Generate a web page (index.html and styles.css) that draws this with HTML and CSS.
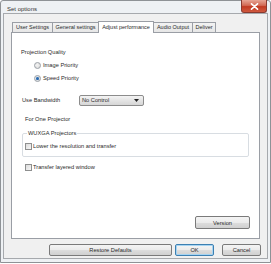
FILE: index.html
```html
<!DOCTYPE html>
<html>
<head>
<meta charset="utf-8">
<link rel="stylesheet" href="styles.css">
</head>
<body>
<div class="window">
  <div class="titlebar">
    <span class="title">Set options</span>
    <div class="close">
      <svg width="9" height="7" viewBox="0 0 9 7"><path d="M1.5 0.8 L7.5 6.2 M7.5 0.8 L1.5 6.2" stroke="#fff" stroke-width="1.6" stroke-linecap="round"/></svg>
    </div>
  </div>
  <div class="client">
    <div class="tabs">
      <div class="tab t1">User Settings</div>
      <div class="tab t2">General settings</div>
      <div class="tab t3 active">Adjust performance</div>
      <div class="tab t4">Audio Output</div>
      <div class="tab t5">Deliver</div>
    </div>
    <div class="panel">
      <div class="txt pq">Projection Quality</div>
      <div class="opt first"><span class="radio"></span>Image Priority</div>
      <div class="opt"><span class="radio checked"></span>Speed Priority</div>
      <div class="bw">
        <span class="bw-label">Use Bandwidth</span>
        <div class="combo"><span>No Control</span>
          <svg width="5" height="3" viewBox="0 0 5 3"><path d="M0 0 H5 L2.5 3 Z" fill="#222"/></svg>
        </div>
      </div>
      <div class="txt one">For One Projector</div>
      <fieldset class="group">
        <legend>WUXGA Projectors</legend>
        <div class="chk-row"><span class="chk"></span>Lower the resolution and transfer</div>
      </fieldset>
      <div class="chk-row layered"><span class="chk"></span>Transfer layered window</div>
      <div class="ver-row"><div class="btn version">Version</div></div>
    </div>
    <div class="buttons">
      <div class="btn restore">Restore Defaults</div>
      <div class="btn ok">OK</div>
      <div class="btn cancel">Cancel</div>
    </div>
  </div>
</div>
</body>
</html>
```
FILE: styles.css
```css
* { box-sizing: border-box; }
html, body { margin: 0; padding: 0; background: #fff; }
body {
  font-family: "Liberation Sans", Arial, sans-serif;
  font-size: 5.7px;
  color: #2a2a2a;
}
.window {
  width: 271px;
  height: 263px;
  border: 1px solid #8e9296;
  border-radius: 3px 3px 0 0;
  background: #eef1f4;
  padding: 0 2px 3px 2px;
  display: flex;
  flex-direction: column;
}
.titlebar {
  height: 14px;
  display: flex;
  align-items: flex-start;
  position: relative;
}
.title {
  margin: 5px 0 0 4px;
  line-height: 7px;
  font-size: 6px;
  color: #333;
}
.close {
  margin-left: auto;
  margin-right: 1px;
  margin-top: -1px;
  width: 26px;
  height: 13px;
  border: 1px solid #8a3a30;
  border-top: none;
  border-radius: 0 0 3px 3px;
  background: linear-gradient(#e7a595, #d26a55 45%, #c23a22 55%, #d05a40);
  display: flex;
  align-items: center;
  justify-content: center;
}
.client {
  flex: 1;
  border: 1px solid #a6a9ad;
  background: #f0f0f0;
  display: flex;
  flex-direction: column;
  padding: 6px 7px 2px 7px;
}
.tabs {
  display: flex;
  align-items: flex-end;
  height: 12px;
  padding-left: 1px;
}
.tab {
  height: 10px;
  border: 1px solid #9a9ea5;
  border-bottom: none;
  background: linear-gradient(#f3f3f3, #e6e6e6);
  line-height: 9px;
  text-align: center;
  margin-left: -1px;
  white-space: nowrap;
  font-size: 5.5px;
}
.t1 { width: 41px; margin-left: 0; }
.t2 { width: 47px; }
.t3 { width: 56px; }
.t4 { width: 40px; }
.t5 { width: 24px; }
.tab.active {
  height: 12px;
  background: #fff;
  position: relative;
  z-index: 1;
  margin-bottom: -1px;
  line-height: 10px;
}
.panel {
  height: 207px;
  border: 1px solid #9a9ea5;
  background: #fff;
  display: flex;
  flex-direction: column;
  padding: 0 9px 9px 9px;
}
.txt, .opt, .chk-row, .bw-label { line-height: 7px; white-space: nowrap; }
.pq { margin-top: 16px; }
.opt {
  display: flex;
  align-items: center;
  padding-left: 13px;
  margin-top: 6px;
}
.radio {
  width: 7px;
  height: 7px;
  border-radius: 50%;
  border: 1px solid #9aa0a6;
  background: radial-gradient(circle at 40% 40%, #f4f4f4, #d8d8d8);
  margin-right: 2px;
  display: flex;
  align-items: center;
  justify-content: center;
}
.radio.checked::after {
  content: "";
  width: 3px;
  height: 3px;
  border-radius: 50%;
  background: #2a6ab0;
  box-shadow: 0 0 1px #7fb0e0;
}
.bw {
  display: flex;
  align-items: center;
  margin-top: 13px;
  padding-left: 1px;
}
.bw-label { width: 57px; }
.combo {
  width: 65px;
  height: 11px;
  border: 1px solid #8c8c8c;
  border-radius: 2px;
  background: linear-gradient(#f4f4f4, #e4e4e4 50%, #d6d6d6);
  display: flex;
  align-items: center;
  justify-content: space-between;
  padding: 0 4px 0 2px;
  line-height: 9px;
}
.one { margin-top: 10px; padding-left: 4px; }
.group {
  margin: 7px 0 0 1px;
  width: 227px;
  border: 1px solid #d8dde2;
  border-radius: 2px;
  padding: 6px 0 6px 2px;
  min-width: 0;
}
.group legend {
  padding: 0 1px;
  margin-left: 2px;
  line-height: 7px;
}
.chk-row {
  display: flex;
  align-items: center;
}
.chk {
  width: 7px;
  height: 7px;
  border: 1px solid #8e8f8f;
  background: linear-gradient(135deg, #dcdcdc, #f6f6f6);
  margin-right: 1px;
}
.layered { margin-top: 7px; padding-left: 4px; }
.ver-row {
  margin-top: auto;
  display: flex;
  justify-content: flex-end;
  padding-right: 0;
}
.btn {
  height: 12px;
  border: 1px solid #7a7a7a;
  border-radius: 2px;
  background: linear-gradient(#f4f4f4, #ebebeb 50%, #dddddd 51%, #d0d0d0);
  display: flex;
  align-items: center;
  justify-content: center;
  white-space: nowrap;
}
.version { width: 55px; height: 13px; }
.buttons {
  display: flex;
  justify-content: flex-end;
  margin-top: 5px;
  gap: 0;
}
.restore { width: 123px; }
.ok { width: 39px; margin-left: 3px; border-color: #3c7fb1; box-shadow: inset 0 0 0 1px #a6d4f2; }
.cancel { width: 39px; margin-left: 8px; margin-right: -1px; }
```
